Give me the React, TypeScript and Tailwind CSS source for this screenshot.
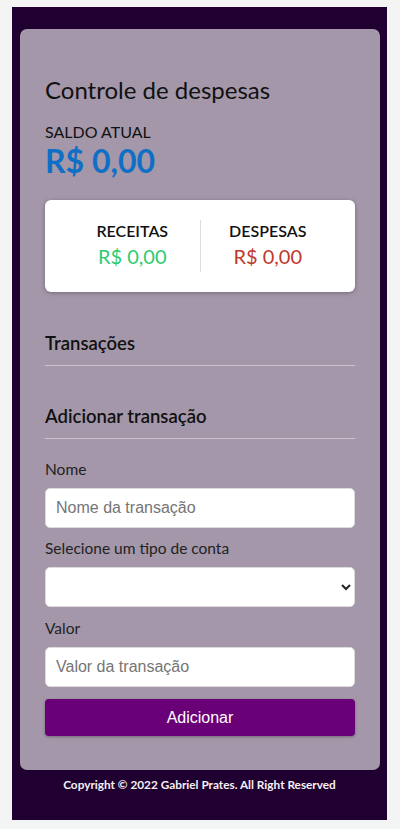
import { useState } from 'react'

const lato = { fontFamily: 'Lato, "Noto Sans", sans-serif' }
const arial = { fontFamily: 'Arial, "Liberation Sans", sans-serif' }

export default function App() {
  const [nome, setNome] = useState('')
  const [tipo, setTipo] = useState('')
  const [valor, setValor] = useState('')

  return (
    <div className="min-h-screen bg-[#f3f4f4] pt-[7px]" style={lato}>
      <div className="ml-[12px] w-[375px] bg-[#1f0030] pt-[22px] pb-[27px]">
        <div className="ml-[8px] w-[360px] rounded-[7px] bg-[#a397a9] px-[25px] pt-[47px] pb-[34px]">
          <h1 className="text-[24px] leading-[28px] text-[#111]">Controle de despesas</h1>

          <p className="mt-[18px] text-[16px] leading-[20px] text-[#111]">SALDO ATUAL</p>
          <p className="text-[32px] leading-[38px] font-bold text-[#0f6fc6]">R$ 0,00</p>

          <div className="mt-[20px] flex rounded-[6px] bg-white px-[20px] py-[20px] shadow-[0_1px_4px_rgba(0,0,0,0.3)]">
            <div className="flex h-[52px] flex-1 flex-col items-center">
              <span className="text-[16px] leading-[21px] font-semibold text-[#111]">RECEITAS</span>
              <span className="text-[20px] leading-[30px] text-[#2ecc71]">R$ 0,00</span>
            </div>
            <div className="w-px bg-[#dddddd]" />
            <div className="flex h-[52px] flex-1 flex-col items-center">
              <span className="text-[16px] leading-[21px] font-semibold text-[#111]">DESPESAS</span>
              <span className="text-[20px] leading-[30px] text-[#c0392b]">R$ 0,00</span>
            </div>
          </div>

          <h3 className="mt-[39px] border-b border-[#cbc4ce] pb-[10px] text-[18.5px] leading-[24px] font-semibold text-[#111]">
            Transações
          </h3>

          <h3 className="mt-[38px] border-b border-[#cbc4ce] pb-[10px] text-[18.5px] leading-[24px] font-semibold text-[#111]">
            Adicionar transação
          </h3>

          <form onSubmit={(e) => e.preventDefault()}>
            <label className="mt-[20px] block text-[15.5px] leading-[20px] text-[#222]">Nome</label>
            <input
              value={nome}
              onChange={(e) => setNome(e.target.value)}
              placeholder="Nome da transação"
              className="mt-[9px] block h-[40px] w-full rounded-[5px] border border-[#dcdcdc] bg-white px-[10px] text-[16px] text-[#222] placeholder:text-[#757575]"
              style={arial}
            />

            <label className="mt-[10px] block text-[15.5px] leading-[20px] text-[#222]">Selecione um tipo de conta</label>
            <select
              value={tipo}
              onChange={(e) => setTipo(e.target.value)}
              className="mt-[9px] block h-[40px] w-full rounded-[5px] border border-[#dcdcdc] bg-white px-[6px] text-[16px] text-[#222]"
              style={arial}
            >
              <option value=""></option>
              <option value="receita">Receita</option>
              <option value="despesa">Despesa</option>
            </select>

            <label className="mt-[11px] block text-[15.5px] leading-[20px] text-[#222]">Valor</label>
            <input
              value={valor}
              onChange={(e) => setValor(e.target.value)}
              placeholder="Valor da transação"
              className="mt-[9px] block h-[40px] w-full rounded-[5px] border border-[#dcdcdc] bg-white px-[10px] text-[16px] text-[#222] placeholder:text-[#757575]"
              style={arial}
            />

            <button
              type="submit"
              className="mt-[12px] block h-[37px] w-full rounded-[4px] bg-[#6a0078] text-[16px] text-white shadow-[0_1px_3px_rgba(0,0,0,0.3)]"
              style={arial}
            >
              Adicionar
            </button>
          </form>
        </div>

        <p className="mt-[7px] text-center text-[11.8px] leading-[16px] font-bold text-[#f4f0f6]">
          Copyright © 2022 Gabriel Prates. All Right Reserved
        </p>
      </div>
    </div>
  )
}
